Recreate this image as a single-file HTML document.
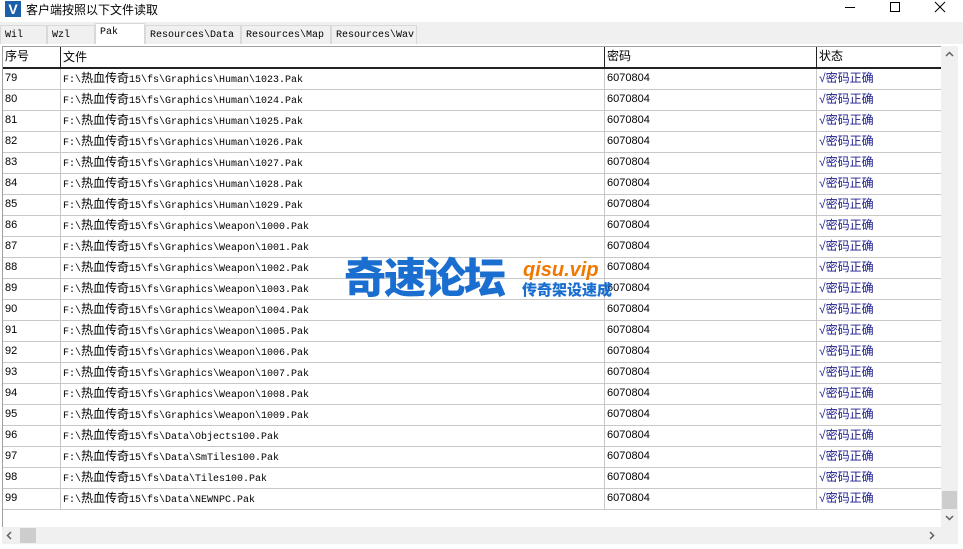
<!DOCTYPE html>
<html><head><meta charset="utf-8"><style>
*{margin:0;padding:0;box-sizing:border-box}
body{width:963px;height:544px;overflow:hidden;background:#fff;font-family:"Liberation Sans","Noto Sans CJK SC",sans-serif;position:relative}
.title{position:absolute;left:0;top:0;width:963px;height:22px;background:#fff}
.logo{position:absolute;left:5px;top:1px;width:16px;height:16px;background:#1a5fa8;color:#fff;font:bold 14px/16px "Liberation Sans",sans-serif;text-align:center}
.ttext{position:absolute;left:26px;top:1px;font-size:12px;color:#000}
.tabbar{position:absolute;left:0;top:22px;width:963px;height:22px;background:#f0f0f0}
.tab{position:absolute;top:25px;height:19px;border:1px solid #d9d9d9;border-bottom:none;font:10px/19px "Liberation Mono",monospace;padding-left:4px;background:#f0f0f0;color:#000}
.tab.act{top:23px;height:21px;background:#fff;border-color:#d9d9d9;line-height:18px}
.grid{position:absolute;left:2px;top:46px;width:939px;height:481px;background:#fff;border-left:1px solid #a0a0a0;border-top:1px solid #a0a0a0}
.row{position:absolute;left:0;width:939px;height:21px;border-bottom:1px solid #c8c8c8;font-size:11px}
.c{position:absolute;top:0;height:21px;line-height:19px;padding-left:2px;white-space:nowrap;overflow:hidden}
.c1{left:0;width:58px;border-right:1px solid #c8c8c8}
.c2{left:58px;width:544px;border-right:1px solid #c8c8c8;font:10px/19px "Liberation Mono",monospace;padding-left:2px}
.c2 span{font:12px "Noto Sans CJK SC",sans-serif}
.c3{left:602px;width:212px;border-right:1px solid #c8c8c8}
.c4{left:814px;width:124px;color:#1a1a8c;font-size:12px}
.hdr{top:0;height:22px;border-bottom:2px solid #222;font-size:12px}
.hdr .c{border-right:1px solid #222}
.vs{position:absolute;left:941px;top:46px;width:17px;height:481px;background:#f0f0f0}
.hs{position:absolute;left:2px;top:527px;width:956px;height:17px;background:#f0f0f0}
.rb{position:absolute;left:958px;top:46px;width:5px;height:498px;background:#fff}
</style></head><body>
<div class="title"><div class="logo">V</div><div class="ttext">客户端按照以下文件读取</div>
<svg style="position:absolute;left:840px;top:0" width="120" height="16"><line x1="5" y1="7.5" x2="15" y2="7.5" stroke="#000"/><rect x="50.5" y="2.5" width="9" height="9" fill="none" stroke="#000"/><path d="M95 2 L105 12 M105 2 L95 12" stroke="#000"/></svg></div>
<div class="tabbar"></div>
<div class="tab" style="left:0;width:47px">Wil</div>
<div class="tab" style="left:47px;width:48px">Wzl</div>
<div class="tab act" style="left:95px;width:50px">Pak</div>
<div class="tab" style="left:145px;width:96px">Resources\Data</div>
<div class="tab" style="left:241px;width:90px">Resources\Map</div>
<div class="tab" style="left:331px;width:86px">Resources\Wav</div>
<div class="grid">
<div class="row hdr"><div class="c c1">序号</div><div class="c c2" style="font:12px/19px 'Noto Sans CJK SC',sans-serif">文件</div><div class="c c3">密码</div><div class="c c4" style="color:#000;border:none">状态</div></div>
<div id="rows"></div>
</div>
<div class="vs"><svg width="17" height="481"><path d="M5 10 L8.5 6.5 L12 10" fill="none" stroke="#606060" stroke-width="1.5"/><rect x="1" y="445" width="15" height="18" fill="#cdcdcd"/><path d="M5 470 L8.5 473.5 L12 470" fill="none" stroke="#606060" stroke-width="1.5"/></svg></div>
<div class="hs"><svg width="956" height="17"><path d="M9 5 L5.5 8.5 L9 12" fill="none" stroke="#606060" stroke-width="1.5"/><rect x="18" y="1" width="16" height="15" fill="#cdcdcd"/><path d="M928 5 L931.5 8.5 L928 12" fill="none" stroke="#606060" stroke-width="1.5"/></svg></div>
<div class="rb"></div>
<div style="position:absolute;left:344px;top:252px;font:900 42px/48px 'Noto Sans CJK SC',sans-serif;color:#1a6ecf;letter-spacing:-2px">奇速论坛</div>
<div style="position:absolute;left:523px;top:258px;font:italic bold 20px/24px 'Liberation Sans',sans-serif;color:#f07800">qisu.vip</div>
<div style="position:absolute;left:522px;top:281px;font:900 15px/18px 'Noto Sans CJK SC',sans-serif;color:#1a6ecf">传奇架设速成</div>
<script>
var f=[];for(var i=23;i<=29;i++)f.push('Graphics\\Human\\10'+i+'.Pak');
for(var i=0;i<=9;i++)f.push('Graphics\\Weapon\\100'+i+'.Pak');
f.push('Data\\Objects100.Pak','Data\\SmTiles100.Pak','Data\\Tiles100.Pak','Data\\NEWNPC.Pak');
var h='';f.forEach(function(x,k){h+='<div class="row" style="top:'+(22+k*21)+'px"><div class="c c1">'+(79+k)+'</div><div class="c c2">F:\\<span>热血传奇</span>15\\fs\\'+x+'</div><div class="c c3">6070804</div><div class="c c4">√密码正确</div></div>';});
document.getElementById('rows').innerHTML=h;
</script>
</body></html>
